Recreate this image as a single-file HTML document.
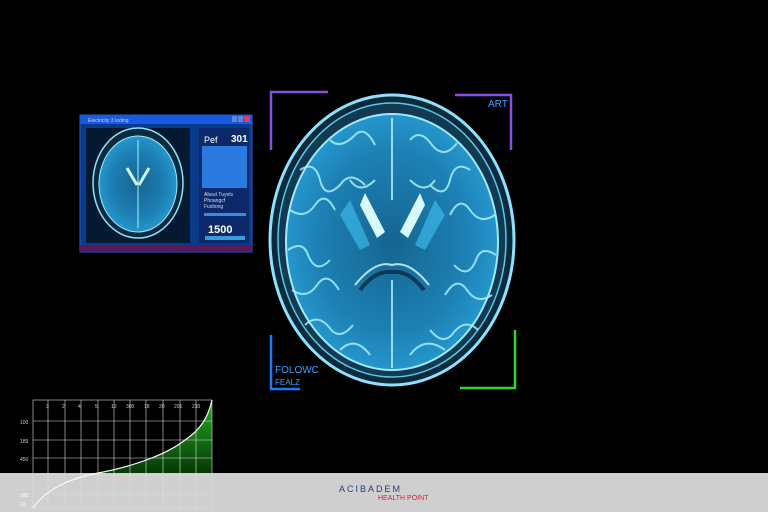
<!DOCTYPE html>
<html><head><style>
html,body{margin:0;padding:0;background:#000;width:768px;height:512px;overflow:hidden;font-family:"Liberation Sans",sans-serif}
svg{position:absolute;left:0;top:0}
</style></head><body>
<svg width="768" height="512" viewBox="0 0 768 512">
<defs>
<radialGradient id="br" cx="50%" cy="50%" r="50%">
<stop offset="0" stop-color="#156590"/><stop offset="0.7" stop-color="#1d80b4"/><stop offset="1" stop-color="#2596cc"/>
</radialGradient>
<linearGradient id="gf" x1="0" y1="0" x2="0" y2="1"><stop offset="0" stop-color="#22b022"/><stop offset="1" stop-color="#063806"/></linearGradient>
</defs>
<!-- main brain -->
<ellipse cx="392" cy="240" rx="122" ry="145" fill="#0b2a3a" stroke="#8fe0ff" stroke-width="3"/>
<ellipse cx="392" cy="240" rx="114" ry="137" fill="#123a50" stroke="#5ac8f0" stroke-width="1.5"/>
<ellipse cx="392" cy="242" rx="106" ry="128" fill="url(#br)" stroke="#9feaff" stroke-width="2"/>
<g fill="none" stroke="#a8f0ff" stroke-width="2" opacity="0.85">
<path d="M392 118 L392 200 M392 280 L392 368"/>
<path d="M300 170 q15 -10 20 10 q5 20 20 5 q10 -15 25 0"/>
<path d="M290 210 q15 10 25 -5 q10 -15 20 5"/>
<path d="M288 250 q15 -10 20 5 q8 20 22 5"/>
<path d="M292 290 q15 10 25 -5 q10 -15 22 5"/>
<path d="M305 325 q12 -12 24 2 q10 15 24 -2"/>
<path d="M330 140 q10 10 25 -5 q10 -10 20 10"/>
<path d="M410 140 q10 -12 22 5 q12 15 25 -2"/>
<path d="M470 170 q-15 -10 -20 10 q-5 20 -20 5"/>
<path d="M495 215 q-15 10 -25 -5 q-10 -15 -20 5"/>
<path d="M496 255 q-15 -10 -20 5 q-8 20 -22 5"/>
<path d="M492 295 q-15 10 -25 -5 q-10 -15 -22 5"/>
<path d="M478 330 q-12 -12 -24 2 q-10 15 -24 -2"/>
<path d="M340 350 q15 -15 30 5 M410 355 q15 -20 35 -5"/>
<path d="M350 180 q10 15 25 0 M410 180 q15 15 25 0"/>
<path d="M360 290 q15 -20 32 -18 q17 -2 32 18" stroke="#0a3050" stroke-width="4"/>
<path d="M355 285 q20 -25 37 -20 q17 -5 37 20" stroke="#cff8ff" stroke-width="2"/>
</g>
<path d="M365 193 L385 232 L377 238 L360 205 Z" fill="#d8faff"/>
<path d="M420 193 L400 232 L408 238 L425 205 Z" fill="#d8faff"/>
<path d="M350 200 L340 215 L360 250 L370 245 Z" fill="#3ab8e8" opacity="0.7"/>
<path d="M435 200 L445 215 L425 250 L415 245 Z" fill="#3ab8e8" opacity="0.7"/>
<!-- brackets -->
<path d="M328 92 H271 V150" fill="none" stroke="#8a4fe0" stroke-width="2.5"/>
<path d="M455 95 H511 V150" fill="none" stroke="#8a4fe0" stroke-width="2.5"/>
<path d="M271 335 V389 H300" fill="none" stroke="#1e78ff" stroke-width="2.5"/>
<path d="M515 330 V388 H460" fill="none" stroke="#2fd42f" stroke-width="2.5"/>
<text x="488" y="107" font-size="10" fill="#3aa0ff">ART</text>
<text x="275" y="373" font-size="10" fill="#3aa0ff">FOLOWC</text>
<text x="275" y="385" font-size="8" fill="#3aa0ff">FEALZ</text>
<!-- small window -->
<rect x="80" y="115" width="172" height="137" fill="#0a3a8a" stroke="#2a5ad0"/>
<rect x="80" y="115" width="172" height="9" fill="#1a5ae0"/>
<text x="88" y="122" font-size="5" fill="#cce">Electricity 3 Ioding</text>
<rect x="232" y="116" width="5" height="6" fill="#5a8ae0"/><rect x="238" y="116" width="5" height="6" fill="#5a8ae0"/><rect x="244" y="116" width="6" height="6" fill="#d04080"/>
<rect x="86" y="128" width="104" height="115" fill="#051a30"/>
<ellipse cx="138" cy="183" rx="45" ry="55" fill="#0a2a40" stroke="#8fe0ff" stroke-width="1.5"/>
<ellipse cx="138" cy="184" rx="39" ry="48" fill="url(#br)" stroke="#9feaff"/>
<path d="M127 168 L137 185 M149 168 L139 185" stroke="#cff8ff" stroke-width="3"/>
<path d="M138 140 V228" stroke="#a8f0ff" stroke-width="1"/>
<rect x="199" y="128" width="50" height="115" fill="#0c2a6a"/>
<text x="204" y="143" font-size="9" fill="#fff">Pef</text>
<text x="231" y="142" font-size="10" fill="#fff" font-weight="bold">301</text>
<rect x="202" y="146" width="45" height="42" fill="#2a7ae0"/>
<text x="204" y="196" font-size="5" fill="#cde">Abeut Tuyets</text>
<text x="204" y="202" font-size="5" fill="#cde">Phoangcf</text>
<text x="204" y="208" font-size="5" fill="#cde">Fustiong</text>
<rect x="204" y="213" width="42" height="3" fill="#3a8ae0"/>
<text x="208" y="233" font-size="11" fill="#fff" font-weight="bold">1500</text>
<rect x="205" y="236" width="40" height="4" fill="#3a9ae0"/>
<rect x="80" y="245" width="172" height="7" fill="#5a1a5a"/>
<!-- chart green fill -->
<path d="M98 473 C140 465 170 452 185 440 C200 430 208 418 212 400 V473 Z" fill="url(#gf)"/>
<!-- bottom bar -->
<rect x="0" y="473" width="768" height="39" fill="#cfcfcf"/>
<text x="339" y="492" font-size="9" fill="#2a3a7a" letter-spacing="2">ACIBADEM</text>
<text x="378" y="500" font-size="7" fill="#d02040">HEALTH POINT</text>
<!-- chart grid -->
<g stroke="#ddd" stroke-width="0.6" fill="none">
<rect x="33" y="400" width="179" height="108"/>
<path d="M48 400V508M65 400V508M81 400V508M98 400V508M114 400V508M130 400V508M146 400V508M163 400V508M180 400V508M196 400V508"/>
<path d="M33 421H212M33 440H212M33 458H212M33 475H212M33 494H212"/>
</g>
<path d="M33 508 C45 490 70 478 98 473 C140 465 170 452 185 440 C200 430 208 418 212 400" stroke="#f0fff0" stroke-width="1.2" fill="none"/>
<g font-size="5" fill="#ccc">
<text x="46" y="408">3</text><text x="62" y="408">2</text><text x="78" y="408">4</text><text x="95" y="408">5</text><text x="111" y="408">10</text><text x="126" y="408">300</text><text x="144" y="408">18</text><text x="159" y="408">20</text><text x="174" y="408">201</text><text x="192" y="408">230</text>
<text x="20" y="424">100</text><text x="20" y="443">189</text><text x="20" y="461">450</text><text x="20" y="478">120</text>
</g>
<g font-size="5" fill="#fff"><text x="20" y="497">180</text><text x="20" y="506">10</text></g>
</svg>
</body></html>
